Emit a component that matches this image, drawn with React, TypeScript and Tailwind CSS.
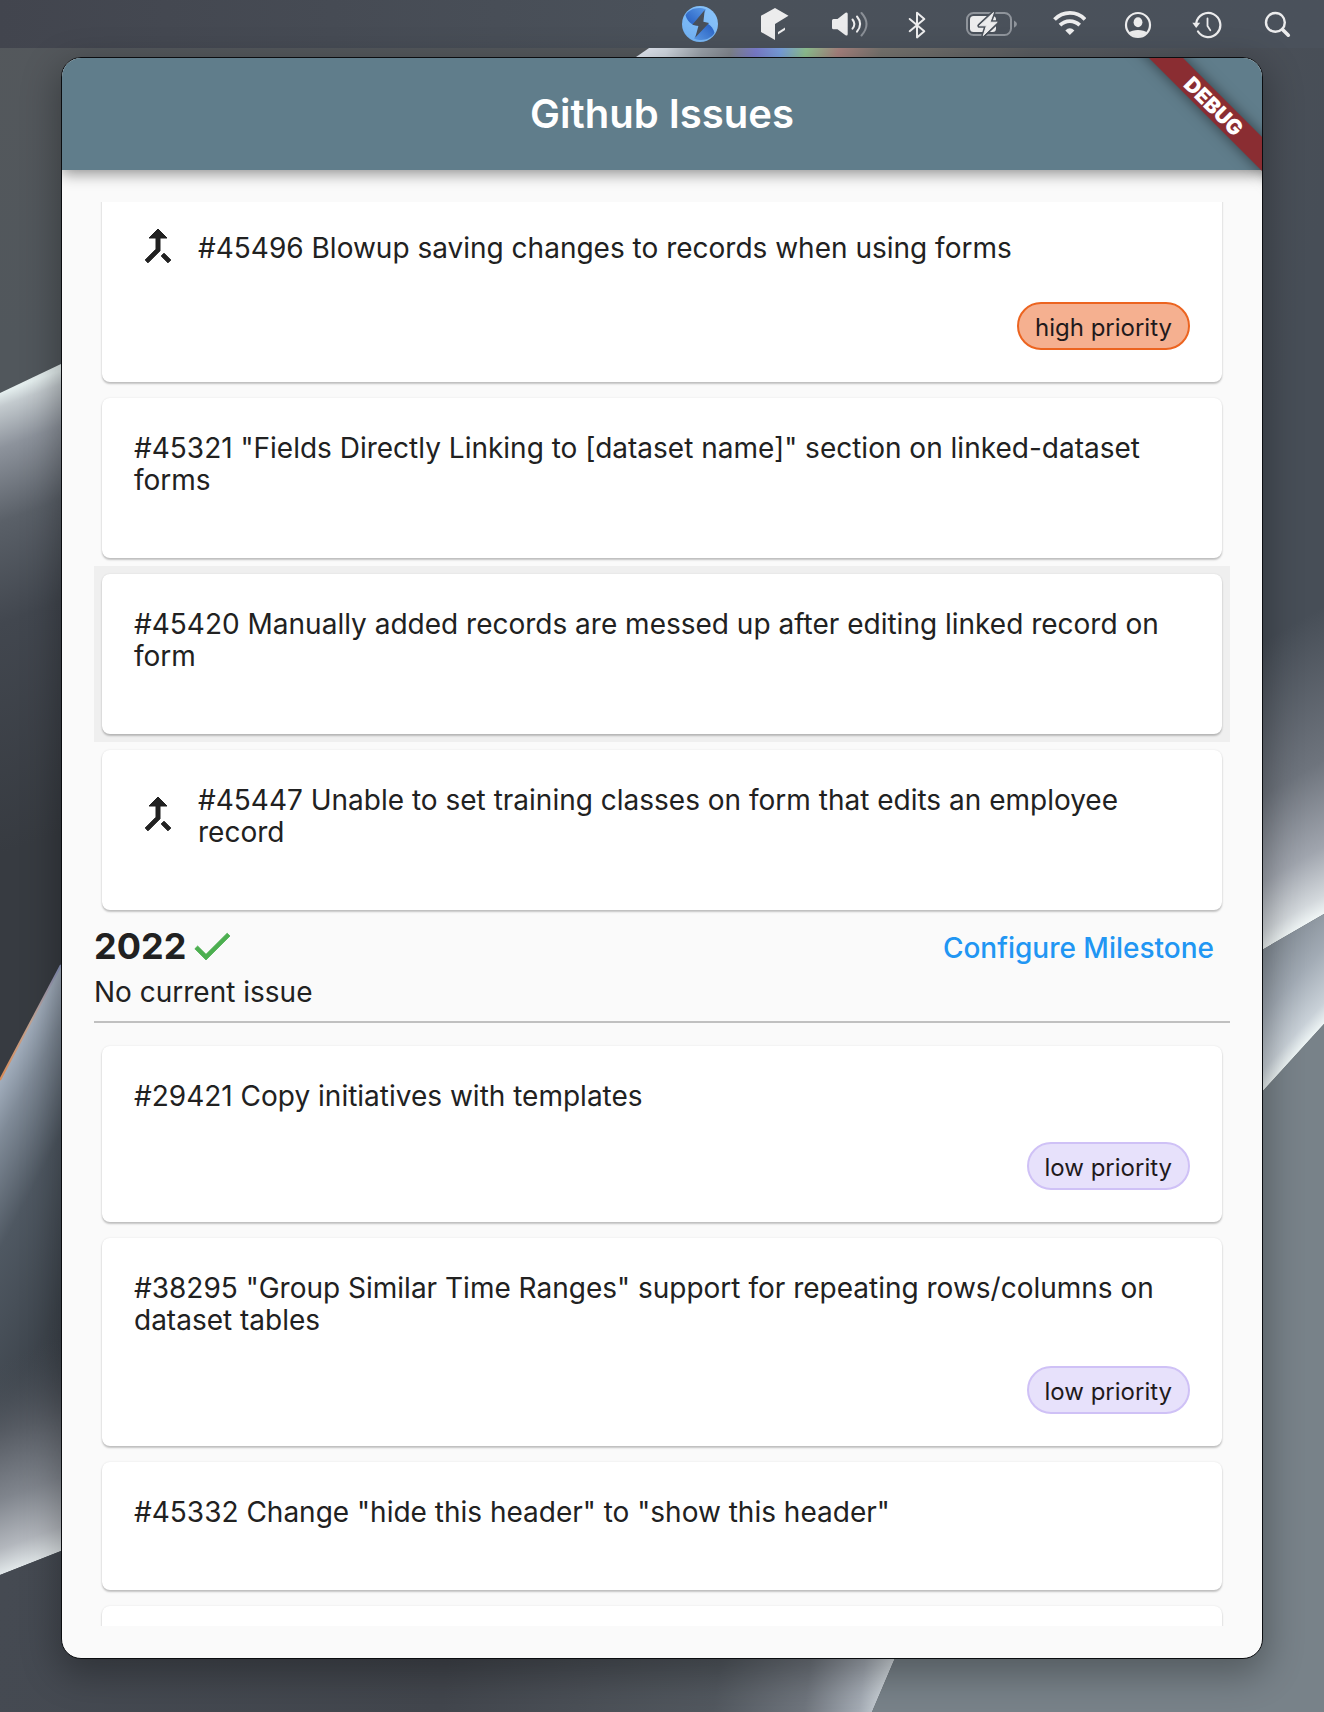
import type { ReactNode } from "react";

type Priority = "high priority" | "low priority";

interface Issue {
  title: string;
  merge?: boolean;
  priority?: Priority;
  hovered?: boolean;
}

const currentIssues: Issue[] = [
  {
    title: "#45496 Blowup saving changes to records when using forms",
    merge: true,
    priority: "high priority",
  },
  {
    title:
      '#45321 "Fields Directly Linking to [dataset name]" section on linked-dataset forms',
  },
  {
    title:
      "#45420 Manually added records are messed up after editing linked record on form",
    hovered: true,
  },
  {
    title:
      "#45447 Unable to set training classes on form that edits an employee record",
    merge: true,
  },
];

const milestoneIssues: Issue[] = [
  { title: "#29421 Copy initiatives with templates", priority: "low priority" },
  {
    title:
      '#38295 "Group Similar Time Ranges" support for repeating rows/columns on dataset tables',
    priority: "low priority",
  },
  { title: '#45332 Change "hide this header" to "show this header"' },
  { title: "" },
];

function Wallpaper() {
  return (
    <svg
      className="absolute inset-0 h-full w-full"
      viewBox="0 0 1324 1712"
      preserveAspectRatio="none"
      aria-hidden="true"
    >
      <defs>
        <linearGradient id="base" x1="0" y1="0" x2="0" y2="1">
          <stop offset="0" stopColor="#54585c" />
          <stop offset="0.2" stopColor="#51575c" />
        </linearGradient>
        <linearGradient id="leftUpper" gradientUnits="userSpaceOnUse" x1="0" y1="393" x2="150" y2="800">
          <stop offset="0" stopColor="#e4eeee" />
          <stop offset="0.03" stopColor="#c3cace" />
          <stop offset="0.12" stopColor="#8d939c" />
          <stop offset="0.28" stopColor="#5a6068" />
          <stop offset="0.5" stopColor="#42474f" />
          <stop offset="1" stopColor="#373b41" />
        </linearGradient>
        <linearGradient id="leftMiddle" gradientUnits="userSpaceOnUse" x1="0" y1="1080" x2="200" y2="1186">
          <stop offset="0" stopColor="#a2aebd" />
          <stop offset="0.12" stopColor="#7f8a97" />
          <stop offset="0.35" stopColor="#4f5862" />
          <stop offset="0.7" stopColor="#3f464e" />
          <stop offset="1" stopColor="#3c4149" />
        </linearGradient>
        <linearGradient id="leftLower" gradientUnits="userSpaceOnUse" x1="0" y1="1575" x2="-70" y2="1385">
          <stop offset="0" stopColor="#e2e8ea" />
          <stop offset="0.12" stopColor="#b3b7bd" />
          <stop offset="0.35" stopColor="#80858d" />
          <stop offset="0.65" stopColor="#575c64" />
          <stop offset="1" stopColor="#454b53" stopOpacity="0" />
        </linearGradient>
        <linearGradient id="rightUpper" gradientUnits="userSpaceOnUse" x1="1324" y1="914" x2="1190" y2="684">
          <stop offset="0" stopColor="#f0f6f6" />
          <stop offset="0.06" stopColor="#d3d8dc" />
          <stop offset="0.22" stopColor="#a0a5ae" />
          <stop offset="0.5" stopColor="#6e747d" />
          <stop offset="1" stopColor="#474e57" />
        </linearGradient>
        <linearGradient id="rightMiddle" gradientUnits="userSpaceOnUse" x1="1324" y1="1024" x2="1248" y2="955">
          <stop offset="0" stopColor="#eef5f5" />
          <stop offset="0.14" stopColor="#c9d1d8" />
          <stop offset="0.5" stopColor="#a2abb5" />
          <stop offset="1" stopColor="#7b848d" />
        </linearGradient>
        <linearGradient id="bottomLeft" gradientUnits="userSpaceOnUse" x1="0" y1="1600" x2="895" y2="1712">
          <stop offset="0" stopColor="#454a52" />
          <stop offset="0.5" stopColor="#42464d" />
          <stop offset="0.8" stopColor="#52585f" />
          <stop offset="0.9" stopColor="#6f757d" />
          <stop offset="0.96" stopColor="#a3aab3" />
          <stop offset="1" stopColor="#e3eaee" />
        </linearGradient>
        <linearGradient id="topStrip" gradientUnits="userSpaceOnUse" x1="636" y1="57" x2="1324" y2="200">
          <stop offset="0" stopColor="#e6ecf6" />
          <stop offset="0.04" stopColor="#d3dae3" />
          <stop offset="0.09" stopColor="#9aa2aa" />
          <stop offset="0.13" stopColor="#82878f" />
          <stop offset="0.165" stopColor="#7d7fd0" />
          <stop offset="0.2" stopColor="#7ba3e0" />
          <stop offset="0.235" stopColor="#92c493" />
          <stop offset="0.28" stopColor="#a98480" />
          <stop offset="0.34" stopColor="#77746f" />
          <stop offset="0.55" stopColor="#5a5d61" />
          <stop offset="0.85" stopColor="#4a4f57" />
          <stop offset="1" stopColor="#474e57" />
        </linearGradient>
        <linearGradient id="rim" gradientUnits="userSpaceOnUse" x1="0" y1="1080" x2="61" y2="965">
          <stop offset="0" stopColor="#d98a55" />
          <stop offset="0.5" stopColor="#c2a493" />
          <stop offset="1" stopColor="#8d99c4" />
        </linearGradient>
      </defs>
      <rect width="1324" height="1712" fill="url(#base)" />
      <path d="M636 57 652 46H1324V600H636Z" fill="url(#topStrip)" />
      <path d="M0 393 61 364 200 300V1200H0Z" fill="url(#leftUpper)" />
      <path d="M0 1080 61 965 200 700V1712H0Z" fill="url(#leftMiddle)" />
      <path d="M0 1080 61 965" stroke="url(#rim)" strokeWidth="2" fill="none" />
      <path d="M0 1300H200V1490L61 1551 0 1575Z" fill="url(#leftLower)" />
      <path d="M0 1575 61 1551 200 1500H962L895 1658 872 1712H0Z" fill="url(#bottomLeft)" />
      <path d="M962 1500H1324V1712H872L895 1658Z" fill="#788289" />
      <path d="M1200 500H1324V914L1262 950 1200 986Z" fill="url(#rightUpper)" />
      <path d="M1200 986 1262 950 1324 914V1024L1262 1092 1200 1150Z" fill="url(#rightMiddle)" />
      <path d="M1200 1160 1262 1092 1324 1024V1712H1200Z" fill="#788289" />
    </svg>
  );
}

function StatusIcon({
  label,
  viewBox,
  className,
  children,
}: {
  label: string;
  viewBox: string;
  className: string;
  children: ReactNode;
}) {
  return (
    <button type="button" aria-label={label} className="shrink-0">
      <svg viewBox={viewBox} className={className} fill="none" aria-hidden="true">
        {children}
      </svg>
    </button>
  );
}

const ink = "#ececed";

function MenuBar() {
  return (
    <header className="relative flex h-12 shrink-0 items-center justify-end gap-9 bg-linear-to-r from-[#42454e] via-[#4a515a] to-[#4a515b] pr-[30px]">
      <StatusIcon label="Sync" viewBox="682 0 36 48" className="h-12 w-9">
        <defs>
          <linearGradient id="orbLight" x1="0" y1="1" x2="1" y2="0">
            <stop offset="0" stopColor="#6fb0f2" />
            <stop offset="1" stopColor="#8cc5fa" />
          </linearGradient>
          <linearGradient id="orbDark" x1="0" y1="1" x2="1" y2="0">
            <stop offset="0" stopColor="#2259bd" />
            <stop offset="1" stopColor="#5b9be8" />
          </linearGradient>
          <linearGradient id="orbDark2" x1="1" y1="0" x2="0" y2="1">
            <stop offset="0" stopColor="#2259bd" />
            <stop offset="1" stopColor="#5b9be8" />
          </linearGradient>
        </defs>
        <circle cx="700" cy="24" r="18" fill="url(#orbLight)" />
        <path d="M685.5 15C689 9 698 6 706 9.5L697 25.5C691 25 687 21 685.5 15Z" fill="url(#orbDark)" />
        <path d="M714.5 33C711 39 702 42 694 38.5L703 22.5C709 23 713 27 714.5 33Z" fill="url(#orbDark2)" />
        <path d="M704.7 10 692.3 24.8 698.4 26 695.3 37.5 709 23 703.4 21.8Z" fill="#484f59" />
      </StatusIcon>
      <StatusIcon label="Cube" viewBox="755 0 42 48" className="h-12 w-[42px]">
        <path d="M776 8 789.5 15.7 776 24V40L762 32V15.7Z" fill={ink} />
        <path d="M779 32 786 27.5V30L779 34.5Z" fill={ink} />
      </StatusIcon>
      <StatusIcon label="Volume" viewBox="832 0 36 48" className="h-12 w-9">
        <path
          d="M833.5 19H837.5L845.5 12.8Q847.7 11.6 847.7 14V34Q847.7 36.4 845.5 35.2L837.5 29.3H833.5Q832 29.3 832 27.8V20.5Q832 19 833.5 19Z"
          fill={ink}
        />
        <path d="M852.5 19.5Q856.2 24 852.5 28.7" stroke={ink} strokeWidth="2" strokeLinecap="round" />
        <path d="M857 16.5Q863.2 24 857 31.7" stroke={ink} strokeWidth="2" strokeLinecap="round" />
        <path d="M861.5 13Q871.5 24 861.5 35.5" stroke="#8b9097" strokeWidth="2" strokeLinecap="round" />
      </StatusIcon>
      <StatusIcon label="Bluetooth" viewBox="904 0 26 48" className="h-12 w-[26px]">
        <path
          d="M909.7 19 924.3 31.2 917 37.4V12.8L924.3 19 909.7 31.2"
          stroke={ink}
          strokeWidth="2"
          strokeLinejoin="round"
          strokeLinecap="round"
        />
      </StatusIcon>
      <StatusIcon label="Battery charging" viewBox="966 0 51 48" className="h-12 w-[51px]">
        <rect x="967" y="13" width="44" height="22" rx="6.5" stroke="#8f949b" strokeWidth="2" />
        <path d="M1014 20.5Q1017 22 1017 24T1014 27.8Z" fill="#8f949b" />
        <rect x="970" y="16" width="26" height="16" rx="3.5" fill={ink} />
        <path
          d="M993.5 12.5 979.3 25.8H986.4L983.3 35.6 997.2 22.2H990Z"
          fill={ink}
          stroke="#4a515a"
          strokeWidth="4"
          strokeLinejoin="round"
        />
        <path
          d="M993.5 12.5 979.3 25.8H986.4L983.3 35.6 997.2 22.2H990Z"
          fill={ink}
          stroke={ink}
          strokeWidth="1"
          strokeLinejoin="round"
        />
      </StatusIcon>
      <StatusIcon label="Wi-Fi" viewBox="1053 0 33 48" className="h-12 w-[33px]">
        <path d="M1054.5 19.5C1063 10.7 1077 10.7 1085 19.5" stroke={ink} strokeWidth="3.8" />
        <path d="M1060 25.2C1065.5 19.7 1074 19.7 1079.7 25.2" stroke={ink} strokeWidth="3.8" />
        <path d="M1065.3 30.4Q1069.8 26.3 1074.4 30.4L1069.8 35Z" fill={ink} />
      </StatusIcon>
      <StatusIcon label="User" viewBox="1122 0 32 48" className="h-12 w-8">
        <circle cx="1138" cy="25" r="12" stroke={ink} strokeWidth="2.2" />
        <ellipse cx="1138" cy="22.2" rx="4.4" ry="5" fill={ink} />
        <path d="M1129 32.5C1132 29 1144 29 1147 32.5 1143 38 1133 38 1129 32.5Z" fill={ink} />
      </StatusIcon>
      <StatusIcon label="Time Machine" viewBox="1190 0 32 48" className="h-12 w-8">
        <path d="M1196.3 23A12.1 12.1 0 1 1 1198 31.5" stroke={ink} strokeWidth="2.2" strokeLinecap="round" />
        <path d="M1192.3 22.7H1200.2L1196.2 28Z" fill={ink} />
        <path d="M1207.5 18.5V26L1210.3 30.3" stroke={ink} strokeWidth="1.8" strokeLinecap="round" />
      </StatusIcon>
      <StatusIcon label="Search" viewBox="1258 0 36 48" className="h-12 w-9">
        <circle cx="1275.4" cy="22.4" r="9.4" stroke={ink} strokeWidth="2.4" />
        <path d="M1282.5 29.5 1288.3 35.2" stroke={ink} strokeWidth="3.6" strokeLinecap="round" />
      </StatusIcon>
    </header>
  );
}

function MergeIcon() {
  return (
    <svg
      viewBox="0 0 24 24"
      className="size-12 shrink-0"
      fill="currentColor"
      stroke="currentColor"
      strokeWidth="0.5"
      aria-hidden="true"
    >
      <path d="M17 20.41 18.41 19 15 15.59 13.59 17 17 20.41zM7.5 8H11v5.59L5.59 19 7 20.41l6-6V8h3.5L12 3.5 7.5 8z" />
    </svg>
  );
}

function PriorityChip({ priority }: { priority: Priority }) {
  return (
    <span
      className={`flex h-12 items-center rounded-full border-2 px-4 pt-1 text-2xl text-[#1f1a1c] ${
        priority === "high priority"
          ? "border-[#ec6420] bg-[#f5b090]"
          : "border-[#cfc1f6] bg-[#e7e1fb]"
      }`}
    >
      {priority}
    </span>
  );
}

function IssueCard({ issue }: { issue: Issue }) {
  return (
    <li className={issue.hovered ? "bg-[#efefef] p-2" : "p-2"}>
      <article className="flex min-h-32 flex-col gap-8 rounded-lg bg-white p-8 shadow-[0_2px_2px_rgba(0,0,0,0.22),0_0_2px_rgba(0,0,0,0.10)]">
        {issue.title && (
          <div className="flex items-center gap-4">
            {issue.merge && <MergeIcon />}
            <h3 className="-mb-0.5 pt-0.5">{issue.title}</h3>
          </div>
        )}
        <div className="flex justify-end">
          {issue.priority && <PriorityChip priority={issue.priority} />}
        </div>
      </article>
    </li>
  );
}

export default function App() {
  return (
    <div className="relative flex h-screen flex-col overflow-hidden font-['Inter',sans-serif] text-[#212121]">
      <Wallpaper />
      <MenuBar />
      <main className="relative mx-[61px] mt-[9px] mb-[53px] flex min-h-0 flex-1 flex-col overflow-hidden rounded-[20px] border border-[#0b0d10] bg-[#fafafa] shadow-[0_12px_36px_4px_rgba(0,0,0,0.3)]">
        <div className="relative flex h-28 shrink-0 items-center justify-center bg-[#607d8b] shadow-[0_4px_14px_rgba(0,0,0,0.42)]">
          <h1 className="text-[40px] leading-none font-semibold text-white">Github Issues</h1>
          <div className="absolute top-9 -right-18 flex h-6 w-60 rotate-45 items-center justify-center bg-[#8a2d32] text-[21px] leading-none font-black text-white shadow-[0_0_14px_rgba(0,0,0,0.5)]">
            DEBUG
          </div>
        </div>
        <div className="m-8 min-h-0 flex-1 overflow-hidden text-[28px] leading-8">
          <div className="-mt-5">
            <ul>
              {currentIssues.map((issue) => (
                <IssueCard key={issue.title} issue={issue} />
              ))}
            </ul>
            <section>
              <div className="flex h-14 items-center gap-0.5">
                <h2 className="text-4xl font-bold">2022</h2>
                <svg
                  viewBox="0 0 24 24"
                  className="size-12"
                  fill="#4caf50"
                  stroke="#4caf50"
                  strokeWidth="0.4"
                  aria-hidden="true"
                >
                  <path d="M9 16.17 4.83 12l-1.42 1.41L9 19 21 7l-1.41-1.41z" />
                </svg>
                <button type="button" className="ml-auto px-4 pt-1 font-medium text-[#2196f3]">
                  Configure Milestone
                </button>
              </div>
              <p className="-mb-0.5 pt-0.5">No current issue</p>
              <div className="flex h-8 items-center">
                <hr className="w-full border-t-2 border-[#c0c0c0]" />
              </div>
              <ul>
                {milestoneIssues.map((issue) => (
                  <IssueCard key={issue.title} issue={issue} />
                ))}
              </ul>
            </section>
          </div>
        </div>
      </main>
    </div>
  );
}
